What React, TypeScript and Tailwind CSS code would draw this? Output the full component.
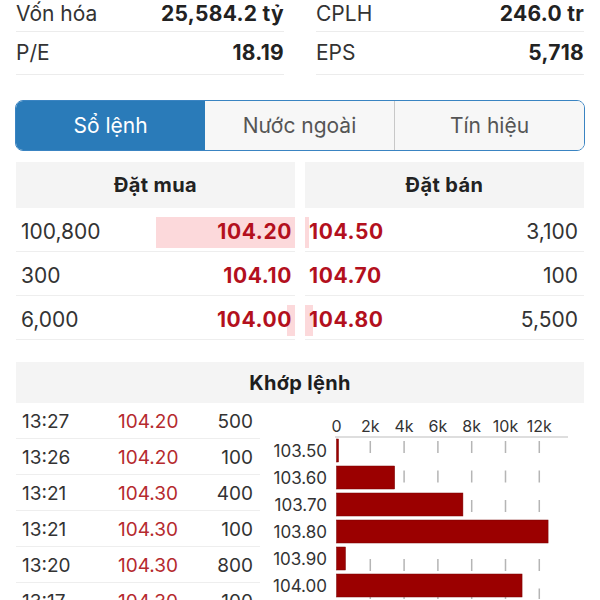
const font = { fontFamily: "Inter, 'Liberation Sans', sans-serif" };

const stats = [
  [
    ["Vốn hóa", "25,584.2 tỷ"],
    ["P/E", "18.19"],
  ],
  [
    ["CPLH", "246.0 tr"],
    ["EPS", "5,718"],
  ],
];

const bids = [
  { vol: "100,800", price: "104.20", pct: 50 },
  { vol: "300", price: "104.10", pct: 0 },
  { vol: "6,000", price: "104.00", pct: 3 },
];

const asks = [
  { vol: "3,100", price: "104.50", pct: 1.5 },
  { vol: "100", price: "104.70", pct: 0 },
  { vol: "5,500", price: "104.80", pct: 3 },
];

const trades = [
  ["13:27", "104.20", "500"],
  ["13:26", "104.20", "100"],
  ["13:21", "104.30", "400"],
  ["13:21", "104.30", "100"],
  ["13:20", "104.30", "800"],
  ["13:17", "104.30", "100"],
];

const chartRows = [
  ["103.50", 120],
  ["103.60", 3440],
  ["103.70", 7480],
  ["103.80", 12520],
  ["103.90", 530],
  ["104.00", 10980],
] as const;

const VolumeChart = () => {
  const x0 = 66.5;
  const perK = 16.9;
  const ticks = [0, 2, 4, 6, 8, 10, 12];
  return (
    <svg width="314" height="196" viewBox="0 0 314 196" style={font}>
      {ticks.slice(1).map((t) => (
        <line
          key={t}
          x1={x0 + t * perK}
          x2={x0 + t * perK}
          y1={38}
          y2={196}
          stroke="#b5b5b5"
          strokeWidth="1.5"
          strokeDasharray="12 17.5"
        />
      ))}
      <line x1="65" x2="298" y1="34" y2="34" stroke="#bdbdbd" strokeWidth="1" />
      {ticks.map((t) => (
        <text key={t} x={x0 + t * perK} y="29" fontSize="16" fill="#333" textAnchor="middle">
          {t === 0 ? "0" : `${t}k`}
        </text>
      ))}
      {chartRows.map(([label, v], i) => {
        const y = 36 + i * 27;
        return (
          <g key={label}>
            <text x="57" y={y + 18} fontSize="17" fill="#333" textAnchor="end">
              {label}
            </text>
            <rect
              x={x0}
              y={y}
              width={Math.max(2, (v / 1000) * perK)}
              height="23"
              fill="#9b0000"
              stroke="#7a0000"
              strokeWidth="0.5"
            />
          </g>
        );
      })}
    </svg>
  );
};

export default function App() {
  return (
    <div className="w-[600px] h-[600px] overflow-hidden bg-white text-[#2b2b2b]" style={font}>
      <div className="grid grid-cols-2 gap-8 px-4">
        {stats.map((col, ci) => (
          <div key={ci} className="flex flex-col">
            {col.map(([label, value], ri) => (
              <div
                key={label}
                className={`flex items-center justify-between border-b border-[#ececec] ${
                  ri === 0 ? "h-[32px] pb-1" : "h-[43px]"
                }`}
              >
                <span className="text-[21px] text-[#333]">{label}</span>
                <span className="text-[21px] font-bold tracking-[0.3px] text-[#222]">{value}</span>
              </div>
            ))}
          </div>
        ))}
      </div>

      <div className="mx-[15px] mt-[25px] flex h-[51px] rounded-[8px] border-[1.5px] border-[#3a84c2] overflow-hidden text-[21px]">
        <div className="flex flex-1 items-center justify-center bg-[#2a7bb9] text-white">Sổ lệnh</div>
        <div className="flex flex-1 items-center justify-center border-r border-[#c8c8c8] bg-[#f7f7f7] text-[#555]">
          Nước ngoài
        </div>
        <div className="flex flex-1 items-center justify-center bg-[#f7f7f7] text-[#555]">Tín hiệu</div>
      </div>

      <div className="mt-[11px] grid grid-cols-2 gap-[10px] px-4">
        <div>
          <div className="flex h-[46px] items-center justify-center bg-[#f4f4f4] text-[20px] font-bold tracking-[0.4px] text-[#222]">
            Đặt mua
          </div>
          {bids.map((b) => (
            <div key={b.price} className="relative flex h-[44px] items-center justify-between border-b border-[#eeeeee] pl-[5px] pt-[4px]">
              <div
                className="absolute right-0 top-[9px] h-[31px] bg-[#fcd9db]"
                style={{ width: `${b.pct}%` }}
              />
              <span className="relative text-[21px] text-[#333]">{b.vol}</span>
              <span className="relative pr-[3px] text-[21px] font-bold tracking-[0.6px] text-[#b3101d]">{b.price}</span>
            </div>
          ))}
        </div>
        <div>
          <div className="flex h-[46px] items-center justify-center bg-[#f4f4f4] text-[20px] font-bold tracking-[0.4px] text-[#222]">
            Đặt bán
          </div>
          {asks.map((a) => (
            <div key={a.price} className="relative flex h-[44px] items-center justify-between border-b border-[#eeeeee] pr-[6px] pt-[4px]">
              <div
                className="absolute left-0 top-[9px] h-[31px] bg-[#fcd9db]"
                style={{ width: `${a.pct}%` }}
              />
              <span className="relative pl-[4px] text-[21px] font-bold tracking-[0.6px] text-[#b3101d]">{a.price}</span>
              <span className="relative text-[21px] text-[#333]">{a.vol}</span>
            </div>
          ))}
        </div>
      </div>

      <div className="mx-4 mt-[22px] flex h-[41px] items-center justify-center bg-[#f4f4f4] text-[20px] font-bold tracking-[0.3px] text-[#1e1e1e]">
        Khớp lệnh
      </div>

      <div className="flex px-4">
        <div className="w-[244px]">
          {trades.map(([t, p, v], i) => (
            <div
              key={i}
              className="flex h-[36px] items-center border-b border-[#eeeeee] pt-[3px] text-[19px]"
            >
              <span className="w-[102px] pl-[6px] text-[#333]">{t}</span>
              <span className="w-[80px] text-[#b52a2e]">{p}</span>
              <span className="flex-1 pr-[7px] text-right text-[#333]">{v}</span>
            </div>
          ))}
        </div>
        <div className="ml-[10px]">
          <VolumeChart />
        </div>
      </div>
    </div>
  );
}
